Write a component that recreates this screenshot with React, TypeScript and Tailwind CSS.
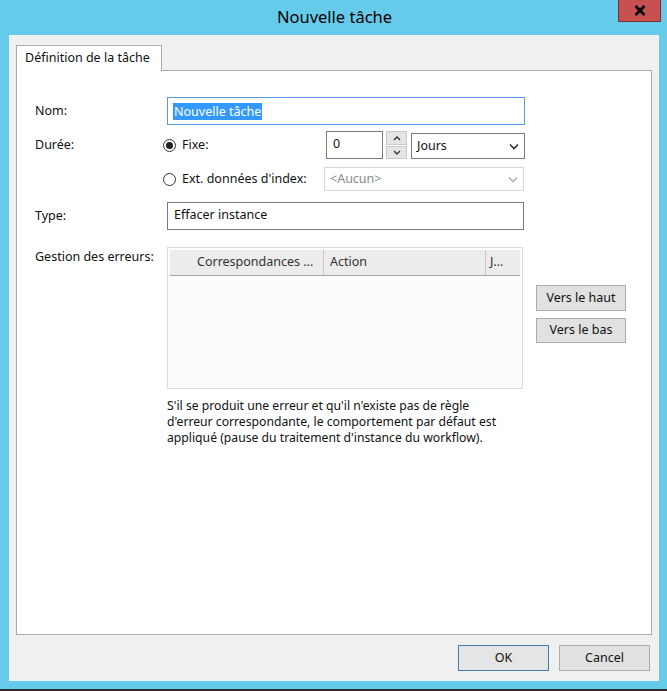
import React from 'react';

const font = "font-['Noto_Sans',sans-serif]";

const Chevron = ({ color = '#333' }: { color?: string }) => (
  <svg width="10" height="7" viewBox="0 0 10 7">
    <polyline points="1,1.5 5,5.5 9,1.5" fill="none" stroke={color} strokeWidth="1.6" />
  </svg>
);

const Radio = ({ checked }: { checked?: boolean }) => (
  <span className="w-[13px] h-[13px] rounded-full border border-[#333] bg-white flex items-center justify-center shrink-0">
    {checked && <span className="w-[7px] h-[7px] rounded-full bg-[#222]" />}
  </span>
);

const Button = ({ label, primary }: { label: string; primary?: boolean }) => (
  <button
    className={
      primary
        ? 'w-[91px] h-[26px] bg-[#e5e5e5] border border-[#3c7fb1] text-[12.5px] text-[#111]'
        : 'w-[91px] h-[26px] bg-[#e1e1e1] border border-[#adadad] text-[12.5px] text-[#111]'
    }
  >
    {label}
  </button>
);

export default function App() {
  return (
    <div className={`w-[667px] h-[691px] bg-[#66caea] flex flex-col relative ${font}`}>
      {/* title bar */}
      <div className="h-[35px] flex items-center justify-center text-[16.5px] text-black pb-[1px] pl-[2px]">
        Nouvelle tâche
      </div>
      <div className="absolute top-0 right-[6px] w-[43px] h-[22px] bg-[#c75050] border border-[#7a3030] border-t-0 flex items-center justify-center">
        <svg width="12" height="11" viewBox="0 0 12 11">
          <path d="M1.5 1 L10.5 10 M10.5 1 L1.5 10" stroke="#000" strokeWidth="2.6" />
        </svg>
      </div>

      {/* client area */}
      <div className="ml-[9px] w-[650px] h-[646px] bg-[#f0f0f0] pl-[7px] pt-[10px] flex flex-col text-[12.5px] text-[#111]">
        <div className="relative z-10 w-[146px] h-[26px] bg-white border border-b-0 border-[#acacac] pl-[8px] flex items-center">
          Définition de la tâche
        </div>
        <div className="-mt-[1px] w-[636px] h-[565px] bg-white border border-[#acacac] pl-[18px] flex flex-col">
          {/* Nom */}
          <div className="mt-[26px] h-[28px] flex items-center">
            <span className="w-[132px]">Nom:</span>
            <div className="w-[358px] h-[28px] border border-[#569de5] flex items-center pl-[5px]">
              <span className="bg-[#3399ff] text-white leading-[17px] px-[1px]">Nouvelle tâche</span>
            </div>
          </div>

          {/* Durée fixe */}
          <div className="mt-[6px] h-[28px] flex items-center">
            <span className="w-[128px]">Durée:</span>
            <div className="w-[163px] flex items-center gap-[6px]">
              <Radio checked />
              <span>Fixe:</span>
            </div>
            <div className="w-[57px] h-[28px] border border-[#7a7a7a] pl-[6px] pt-[3px]">0</div>
            <div className="ml-[3px] w-[21px] h-[28px] flex flex-col gap-[1px]">
              <div className="h-[14px] bg-[#e5e5e5] border border-[#c9c9c9] flex items-center justify-center">
                <svg width="8" height="5" viewBox="0 0 8 5">
                  <polyline points="1,4 4,1 7,4" fill="none" stroke="#333" strokeWidth="1.4" />
                </svg>
              </div>
              <div className="h-[13px] bg-[#e5e5e5] border border-[#c9c9c9] flex items-center justify-center">
                <svg width="8" height="5" viewBox="0 0 8 5">
                  <polyline points="1,1 4,4 7,1" fill="none" stroke="#333" strokeWidth="1.4" />
                </svg>
              </div>
            </div>
            <div className="ml-[4px] w-[114px] h-[26px] mt-[2px] border border-[#7a7a7a] flex items-center justify-between pl-[5px] pr-[5px]">
              <span>Jours</span>
              <Chevron />
            </div>
          </div>

          {/* Durée index */}
          <div className="mt-[8px] h-[24px] flex items-center">
            <span className="w-[128px]" />
            <div className="w-[161px] flex items-center gap-[6px]">
              <Radio />
              <span>Ext. données d&apos;index:</span>
            </div>
            <div className="w-[200px] h-[24px] border border-[#d9d9d9] flex items-center justify-between pl-[5px] pr-[5px] text-[#8a8a8a]">
              <span>&lt;Aucun&gt;</span>
              <Chevron color="#b5b5b5" />
            </div>
          </div>

          {/* Type */}
          <div className="mt-[11px] h-[28px] flex items-center">
            <span className="w-[132px]">Type:</span>
            <div className="w-[357px] h-[28px] border border-[#7a7a7a] flex items-center pl-[6px] pb-[2px]">
              Effacer instance
            </div>
          </div>

          {/* Gestion des erreurs */}
          <div className="mt-[17px] flex items-start">
            <span className="w-[132px] pt-[1px]">Gestion des erreurs:</span>
            <div className="w-[356px] h-[142px] border border-[#dcdcdc] bg-[#fcfcfc] p-[2px]">
              <div className="h-[26px] bg-[#ececec] border-b border-[#a8a8a8] flex items-center text-[#333]">
                <div className="w-[154px] h-full border-r border-[#c8c8c8] pl-[27px] flex items-center">
                  Correspondances ...
                </div>
                <div className="w-[162px] h-full border-r border-[#c8c8c8] pl-[6px] flex items-center">
                  Action
                </div>
                <div className="pl-[4px]">J...</div>
              </div>
            </div>
            <div className="ml-[13px] mt-[38px] flex flex-col gap-[7px]">
              <button className="w-[90px] h-[26px] bg-[#e1e1e1] border border-[#adadad] text-[12.5px] text-[#111]">
                Vers le haut
              </button>
              <button className="w-[90px] h-[25px] bg-[#e1e1e1] border border-[#adadad] text-[12.5px] text-[#111]">
                Vers le bas
              </button>
            </div>
          </div>

          <p className="ml-[132px] mt-[9px] w-[370px] leading-[16px] text-[12.2px]">
            S&apos;il se produit une erreur et qu&apos;il n&apos;existe pas de règle
            <br />
            d&apos;erreur correspondante, le comportement par défaut est
            <br />
            appliqué (pause du traitement d&apos;instance du workflow).
          </p>
        </div>

        <div className="mt-[10px] w-[643px] flex justify-end gap-[10px] pr-[9px]">
          <Button label="OK" primary />
          <Button label="Cancel" />
        </div>
      </div>
      <div className="h-[8px]" />
      <div className="h-[2px] bg-[#2a2a2a]" />
    </div>
  );
}
